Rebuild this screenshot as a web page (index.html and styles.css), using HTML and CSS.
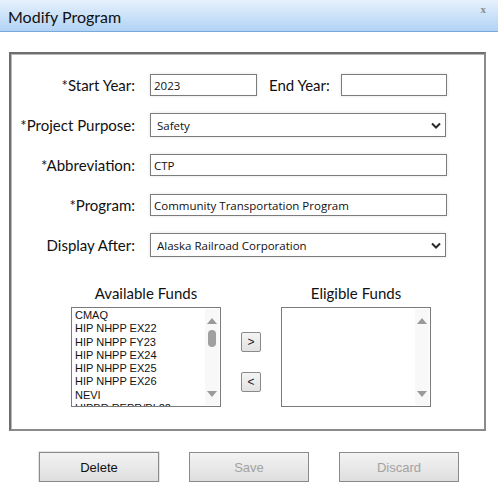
FILE: index.html
```html
<!DOCTYPE html>
<html lang="en">
<head>
    <meta charset="UTF-8">
    <meta name="viewport" content="width=device-width, initial-scale=1.0">
    <title>Modify Program</title>
    <link rel="stylesheet" href="styles.css">
</head>
<body>
    <div class="dialog">
        <div class="titlebar">
            <span class="title">Modify Program</span>
            <span class="close">x</span>
        </div>

        <div class="panel">
            <div class="form">
                <label class="lbl">*Start Year:</label>
                <div class="field-row">
                    <input type="text" class="txt year" value="2023">
                    <label class="lbl end-lbl">End Year:</label>
                    <input type="text" class="txt year end">
                </div>

                <label class="lbl">*Project Purpose:</label>
                <div class="select-wrap">
                    <select class="sel"><option>Safety</option></select>
                    <svg class="chev" width="10" height="7" viewBox="0 0 10 7"><path d="M1 1.5 L5 5.5 L9 1.5" fill="none" stroke="#2b2b2b" stroke-width="2"/></svg>
                </div>

                <label class="lbl">*Abbreviation:</label>
                <input type="text" class="txt wide" value="CTP">

                <label class="lbl">*Program:</label>
                <input type="text" class="txt wide" value="Community Transportation Program">

                <label class="lbl">Display After:</label>
                <div class="select-wrap">
                    <select class="sel"><option>Alaska Railroad Corporation</option></select>
                    <svg class="chev" width="10" height="7" viewBox="0 0 10 7"><path d="M1 1.5 L5 5.5 L9 1.5" fill="none" stroke="#2b2b2b" stroke-width="2"/></svg>
                </div>
            </div>

            <div class="funds">
                <div class="fund-col">
                    <div class="fund-title">Available Funds</div>
                    <div class="listbox">
                        <div class="items">
                            <div>CMAQ</div>
                            <div>HIP NHPP EX22</div>
                            <div>HIP NHPP FY23</div>
                            <div>HIP NHPP EX24</div>
                            <div>HIP NHPP EX25</div>
                            <div>HIP NHPP EX26</div>
                            <div>NEVI</div>
                            <div>HIPBR REPR/PL22</div>
                        </div>
                        <div class="scroll">
                            <span class="arrow up"></span>
                            <span class="thumb"></span>
                            <span class="arrow down"></span>
                        </div>
                    </div>
                </div>

                <div class="move-btns">
                    <button class="move">&gt;</button>
                    <button class="move">&lt;</button>
                </div>

                <div class="fund-col">
                    <div class="fund-title">Eligible Funds</div>
                    <div class="listbox">
                        <div class="items"></div>
                        <div class="scroll">
                            <span class="arrow up"></span>
                            <span class="arrow down"></span>
                        </div>
                    </div>
                </div>
            </div>
        </div>

        <div class="actions">
            <button class="act focus">Delete</button>
            <button class="act" disabled>Save</button>
            <button class="act" disabled>Discard</button>
        </div>
    </div>
</body>
</html>
```

FILE: styles.css
```css
body {
    margin: 0;
    background: #fff;
    font-family: Lato, "Open Sans", sans-serif;
    color: #111;
}

.titlebar {
    height: 31px;
    border-bottom: 1px solid #79a9dc;
    background: linear-gradient(to bottom, #e6f1fc, #b2d3f5);
    display: flex;
    align-items: center;
    justify-content: space-between;
    padding: 0 12px 0 8px;
}

.title {
    font-size: 16px;
    color: #111;
    margin-top: 1px;
}

.close {
    font-family: "Liberation Serif", serif;
    font-weight: bold;
    font-size: 11px;
    color: #8c8c8c;
    align-self: flex-start;
    margin-top: 3px;
}

.panel {
    margin: 20px 0 0 9px;
    width: 473px;
    height: 375px;
    border: 2px solid #6e6e6e;
    border-right-color: #8a8a8a;
    border-bottom-color: #8a8a8a;
    box-shadow: inset 1px 1px 0 #b8b8b8;
}

.form {
    display: grid;
    grid-template-columns: 124px auto;
    grid-auto-rows: 40px;
    column-gap: 15px;
    align-items: center;
    margin-top: 11px;
}

.lbl {
    font-size: 15px;
    text-align: right;
}

.field-row {
    display: flex;
    align-items: center;
}

.end-lbl {
    margin: 0 11px 0 12px;
}

.txt {
    box-sizing: border-box;
    height: 22px;
    border: 1px solid #7c7c7c;
    box-shadow: 0 0 3px rgba(0, 0, 0, 0.12);
    font-family: "Open Sans", sans-serif;
    font-size: 11.5px;
    color: #111;
    padding: 0 3px;
    margin: 0;
    outline: none;
}

.year {
    width: 107px;
}

.year.end {
    width: 106px;
}

.wide {
    width: 297px;
}

.select-wrap {
    position: relative;
    width: 296px;
    height: 24px;
}

.sel {
    appearance: none;
    -webkit-appearance: none;
    box-sizing: border-box;
    width: 296px;
    height: 24px;
    border: 1px solid #7c7c7c;
    border-radius: 0;
    background: #fff;
    box-shadow: 0 0 3px rgba(0, 0, 0, 0.12);
    font-family: "Open Sans", sans-serif;
    font-size: 11.5px;
    color: #111;
    padding: 0 6px;
    margin: 0;
}

.chev {
    position: absolute;
    right: 5px;
    top: 9px;
    pointer-events: none;
}

.funds {
    display: flex;
    margin: 18px 0 0 60px;
    gap: 20px;
}

.fund-col {
    width: 150px;
}

.fund-title {
    font-size: 15px;
    text-align: center;
    line-height: 20px;
    margin-bottom: 4px;
}

.listbox {
    box-sizing: border-box;
    height: 100px;
    border: 1px solid #7a7a7a;
    display: flex;
    overflow: hidden;
}

.items {
    flex: 1;
    font-family: "Liberation Sans", Arial, sans-serif;
    font-size: 11px;
    line-height: 13.3px;
    padding: 1px 0 0 3px;
    color: #111;
    white-space: nowrap;
    overflow: hidden;
}

.scroll {
    width: 14px;
    margin: 1px 1px 1px 0;
    background: #f8f8f8;
    display: flex;
    flex-direction: column;
    align-items: center;
    position: relative;
}

.arrow {
    width: 0;
    height: 0;
    border-left: 5px solid transparent;
    border-right: 5px solid transparent;
}

.arrow.up {
    border-bottom: 6px solid #9a9a9a;
    margin-top: 9px;
}

.arrow.down {
    border-top: 6px solid #9a9a9a;
    margin-top: auto;
    margin-bottom: 8px;
}

.thumb {
    width: 8px;
    height: 17px;
    border-radius: 4px;
    background: #a0a0a0;
    margin-top: 6px;
}

.move-btns {
    display: flex;
    flex-direction: column;
    gap: 20px;
    padding-top: 49px;
}

.move {
    box-sizing: border-box;
    width: 20px;
    height: 20px;
    padding: 0;
    border: 1px solid #8a8a8a;
    border-radius: 2px;
    background: linear-gradient(to bottom, #f4f4f4, #e2e2e2);
    font-family: "Liberation Sans", Arial, sans-serif;
    font-size: 12px;
    color: #222;
}

.actions {
    display: flex;
    justify-content: center;
    gap: 30px;
    margin-top: 21px;
}

.act {
    box-sizing: border-box;
    width: 120px;
    height: 30px;
    border: 1px solid #8a8a8a;
    border-radius: 0;
    background: linear-gradient(to bottom, #f3f3f3, #dedede);
    font-family: "Liberation Sans", Arial, sans-serif;
    font-size: 13px;
    color: #111;
}

.act.focus {
    box-shadow: 0 0 0 1px #e6e6e6;
}

.act:disabled {
    color: #a3a3a3;
}
```
